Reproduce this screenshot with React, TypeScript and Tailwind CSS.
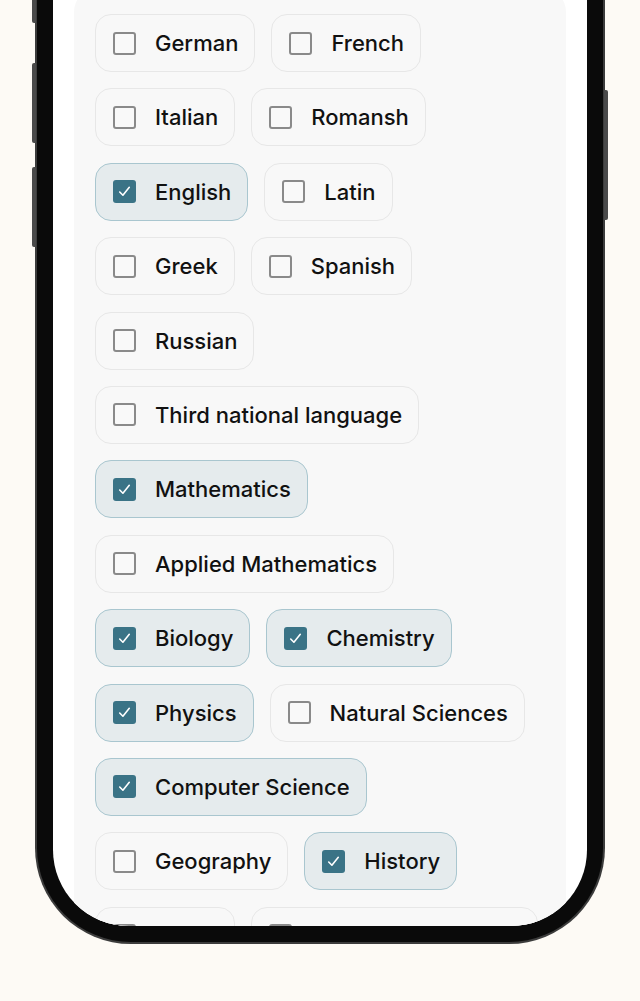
import React from 'react';

const subjects: { name: string; checked: boolean }[] = [
  { name: 'German', checked: false },
  { name: 'French', checked: false },
  { name: 'Italian', checked: false },
  { name: 'Romansh', checked: false },
  { name: 'English', checked: true },
  { name: 'Latin', checked: false },
  { name: 'Greek', checked: false },
  { name: 'Spanish', checked: false },
  { name: 'Russian', checked: false },
  { name: 'Third national language', checked: false },
  { name: 'Mathematics', checked: true },
  { name: 'Applied Mathematics', checked: false },
  { name: 'Biology', checked: true },
  { name: 'Chemistry', checked: true },
  { name: 'Physics', checked: true },
  { name: 'Natural Sciences', checked: false },
  { name: 'Computer Science', checked: true },
  { name: 'Geography', checked: false },
  { name: 'History', checked: true },
  { name: 'Music', checked: false },
  { name: 'Economics and Law', checked: false },
];

function Checkbox({ checked }: { checked: boolean }) {
  if (checked) {
    return (
      <span className="flex h-[23px] w-[23px] shrink-0 items-center justify-center rounded-[3px] bg-[#3a7386]">
        <svg width="17" height="17" viewBox="0 0 16 16" fill="none">
          <polyline points="3.5,8.5 6.5,11.5 12.5,4" stroke="white" strokeWidth="1.5" strokeLinecap="round" strokeLinejoin="round" />
        </svg>
      </span>
    );
  }
  return <span className="h-[23px] w-[23px] shrink-0 rounded-[3px] border-2 border-[#8a8a8a] bg-[#f9f9f9]" />;
}

function Chip({ name, checked }: { name: string; checked: boolean }) {
  return (
    <div
      className={`flex h-[58px] items-center gap-[19px] rounded-[16px] border-[1.5px] pl-[17px] pr-[16px] ${
        checked ? 'border-[#a9c6cf] bg-[#e5ebed]' : 'border-[#e7e7e7] bg-[#f8f8f8]'
      }`}
    >
      <Checkbox checked={checked} />
      <span className="whitespace-nowrap text-[22px] font-medium leading-none text-[#111]">{name}</span>
    </div>
  );
}

export default function App() {
  return (
    <div
      className="relative h-[1001px] w-[640px] overflow-hidden bg-[#fdfaf5]"
      style={{ fontFamily: 'Inter, "Noto Sans", sans-serif' }}
    >
      {/* Phone */}
      <div className="relative mx-auto w-[570px]">
        {/* side buttons */}
        <div className="absolute left-[-3px] top-[-10px] h-[33px] w-[4px] rounded-l-[2px] bg-[#4a4a4a]" />
        <div className="absolute left-[-3px] top-[63px] h-[80px] w-[4px] rounded-l-[2px] bg-[#4a4a4a]" />
        <div className="absolute left-[-3px] top-[167px] h-[80px] w-[4px] rounded-l-[2px] bg-[#4a4a4a]" />
        <div className="absolute right-[-3px] top-[90px] h-[130px] w-[4px] rounded-r-[2px] bg-[#4a4a4a]" />

        <div className="rounded-b-[96px] bg-[#3c3c3c] px-[2px] pb-[2px]">
          <div className="rounded-b-[94px] bg-[#0a0a0a] px-[16px] pb-[16px]">
            <div className="h-[926px] overflow-hidden rounded-b-[76px] bg-white px-[21px]">
              <div className="-mt-[12px] h-[1000px] rounded-[24px] bg-[#f8f8f8] pl-[21px] pr-[26px] pt-[26px]">
                <div className="flex flex-wrap gap-x-[16px] gap-y-[16.4px]">
                  {subjects.map((s) => (
                    <Chip key={s.name} name={s.name} checked={s.checked} />
                  ))}
                </div>
              </div>
            </div>
          </div>
        </div>
      </div>
    </div>
  );
}
